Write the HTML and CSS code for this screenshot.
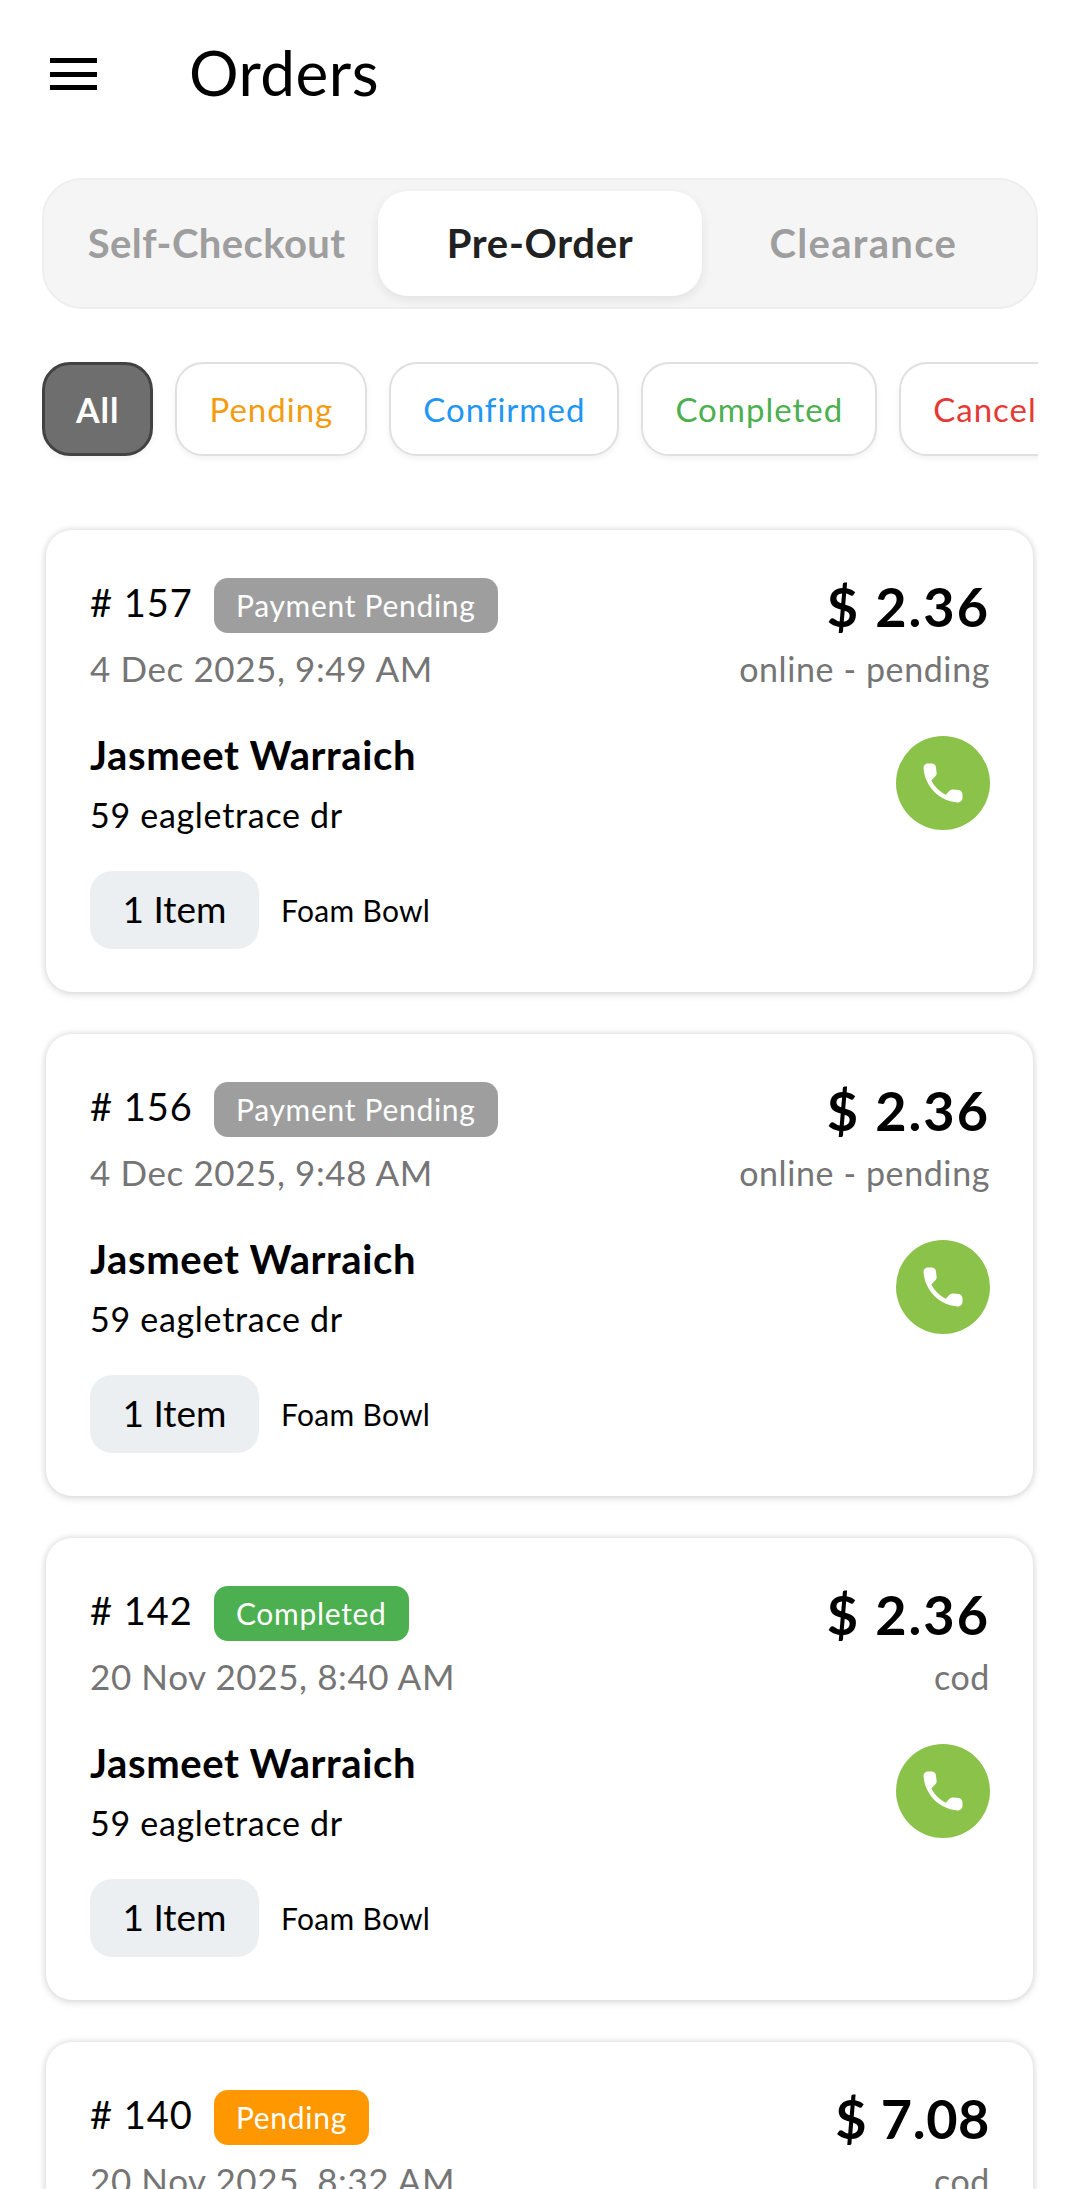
FILE: index.html
```html
<!DOCTYPE html>
<html lang="en">
<head>
<meta charset="utf-8">
<title>Orders</title>
<link rel="stylesheet" href="styles.css">
</head>
<body>
<header class="topbar">
  <svg class="menu-icon" viewBox="0 0 47 32"><path d="M0 0h47v5H0zM0 14h47v5H0zM0 27h47v5H0z"/></svg>
  <h1 class="title">Orders</h1>
</header>
<nav class="segments">
  <div class="segment seg-a">Self-Checkout</div>
  <div class="segment segment-active">Pre-Order</div>
  <div class="segment seg-c">Clearance</div>
</nav>
<div class="filters">
  <div class="chip chip-all">All</div>
  <div class="chip chip-pending">Pending</div>
  <div class="chip chip-confirmed">Confirmed</div>
  <div class="chip chip-completed">Completed</div>
  <div class="chip chip-cancelled">Cancelled</div>
</div>
<main class="orders">
  <article class="card">
    <div class="row">
      <div>
        <div class="id-line"><span class="order-id">#&nbsp;157</span><span class="badge badge-gray">Payment Pending</span></div>
        <div class="date">4 Dec 2025, 9:49 AM</div>
      </div>
      <div class="right"><div class="price">$ 2.36</div><div class="pay">online - pending</div></div>
    </div>
    <div class="row row-mid">
      <div><div class="name">Jasmeet Warraich</div><div class="addr">59 eagletrace dr</div></div>
      <div class="call"><svg viewBox="0 0 24 24"><path d="M19.23 15.26l-2.54-.29c-.61-.07-1.21.14-1.64.57l-1.84 1.84c-2.83-1.44-5.15-3.75-6.59-6.59l1.85-1.85c.43-.43.64-1.03.57-1.64l-.29-2.52c-.12-1.01-.97-1.77-1.99-1.77H5.03c-1.13 0-2.07.94-2 2.07.53 8.54 7.36 15.36 15.89 15.89 1.13.07 2.07-.87 2.07-2v-1.73c.01-1.01-.75-1.86-1.77-1.98z"/></svg></div>
    </div>
    <div class="items"><span class="count">1 Item</span><span class="product">Foam Bowl</span></div>
  </article>
  <article class="card">
    <div class="row">
      <div>
        <div class="id-line"><span class="order-id">#&nbsp;156</span><span class="badge badge-gray">Payment Pending</span></div>
        <div class="date">4 Dec 2025, 9:48 AM</div>
      </div>
      <div class="right"><div class="price">$ 2.36</div><div class="pay">online - pending</div></div>
    </div>
    <div class="row row-mid">
      <div><div class="name">Jasmeet Warraich</div><div class="addr">59 eagletrace dr</div></div>
      <div class="call"><svg viewBox="0 0 24 24"><path d="M19.23 15.26l-2.54-.29c-.61-.07-1.21.14-1.64.57l-1.84 1.84c-2.83-1.44-5.15-3.75-6.59-6.59l1.85-1.85c.43-.43.64-1.03.57-1.64l-.29-2.52c-.12-1.01-.97-1.77-1.99-1.77H5.03c-1.13 0-2.07.94-2 2.07.53 8.54 7.36 15.36 15.89 15.89 1.13.07 2.07-.87 2.07-2v-1.73c.01-1.01-.75-1.86-1.77-1.98z"/></svg></div>
    </div>
    <div class="items"><span class="count">1 Item</span><span class="product">Foam Bowl</span></div>
  </article>
  <article class="card">
    <div class="row">
      <div>
        <div class="id-line"><span class="order-id">#&nbsp;142</span><span class="badge badge-green">Completed</span></div>
        <div class="date">20 Nov 2025, 8:40 AM</div>
      </div>
      <div class="right"><div class="price">$ 2.36</div><div class="pay">cod</div></div>
    </div>
    <div class="row row-mid">
      <div><div class="name">Jasmeet Warraich</div><div class="addr">59 eagletrace dr</div></div>
      <div class="call"><svg viewBox="0 0 24 24"><path d="M19.23 15.26l-2.54-.29c-.61-.07-1.21.14-1.64.57l-1.84 1.84c-2.83-1.44-5.15-3.75-6.59-6.59l1.85-1.85c.43-.43.64-1.03.57-1.64l-.29-2.52c-.12-1.01-.97-1.77-1.99-1.77H5.03c-1.13 0-2.07.94-2 2.07.53 8.54 7.36 15.36 15.89 15.89 1.13.07 2.07-.87 2.07-2v-1.73c.01-1.01-.75-1.86-1.77-1.98z"/></svg></div>
    </div>
    <div class="items"><span class="count">1 Item</span><span class="product">Foam Bowl</span></div>
  </article>
  <article class="card">
    <div class="row">
      <div>
        <div class="id-line"><span class="order-id">#&nbsp;140</span><span class="badge badge-orange">Pending</span></div>
        <div class="date">20 Nov 2025, 8:32 AM</div>
      </div>
      <div class="right"><div class="price price-tight">$ 7.08</div><div class="pay">cod</div></div>
    </div>
  </article>
</main>
</body>
</html>
```
FILE: styles.css
```css
* { box-sizing: border-box; }
html, body { margin: 0; height: 2189px; overflow: hidden; }
body { background: #fff; color: #000; font-family: "Lato", "Open Sans", sans-serif; }

.topbar { display: flex; align-items: center; height: 148px; padding-left: 50px; }
.menu-icon { width: 47px; height: 32px; fill: #000; flex: none; }
.title { margin: 0 0 4px 92px; font-size: 62px; font-weight: 400; line-height: 70px; letter-spacing: 0.5px; }

.segments { display: flex; align-items: center; height: 131px; margin: 30px 42px 0; padding: 0 11px; background: #f5f5f5; border: 2px solid #eee; border-radius: 40px; }
.segment { flex: 1; display: flex; align-items: center; justify-content: center; height: 105px; padding-bottom: 2px; font-size: 40px; font-weight: 700; letter-spacing: 0.7px; color: #9e9e9e; border-radius: 30px; }
.seg-a { letter-spacing: 0.4px; }
.seg-c { letter-spacing: 1.3px; }
.segment-active { background: #fff; color: #212121; box-shadow: 0 4px 12px rgba(0,0,0,.08); }

.filters { display: flex; gap: 22px; height: 108px; margin: 53px 42px 0; overflow: hidden; }
.chip { flex: none; display: flex; align-items: center; height: 94px; padding: 0 32px; font-size: 33px; letter-spacing: 1px; background: #fff; border: 2px solid #e0e0e0; border-radius: 28px; box-shadow: 0 3px 6px rgba(0,0,0,.05); }
.chip-all { background: #6e6e6e; border: 3px solid #424242; color: #fff; font-weight: 700; font-size: 34px; padding: 0 31px; }
.chip-pending { color: #f39c12; }
.chip-confirmed { color: #2196f3; }
.chip-completed { color: #4caf50; }
.chip-cancelled { color: #e53935; }

.orders { display: flex; flex-direction: column; gap: 42px; margin: 60px 47px 0 46px; }
.card { height: 462px; padding: 47px 43px 0 44px; background: #fff; border-radius: 26px; box-shadow: 0 0 6px 1px rgba(0,0,0,.12), 0 3px 10px rgba(0,0,0,.07); }
.row { display: flex; justify-content: space-between; align-items: flex-start; }
.row-mid { align-items: center; height: 106px; margin-top: 39px; }
.id-line { display: flex; align-items: center; height: 56px; }
.order-id { padding-bottom: 6px; font-size: 38px; letter-spacing: 1px; }
.badge { margin-left: 21px; height: 55px; line-height: 55px; padding: 0 22px; color: #fff; font-size: 30px; letter-spacing: 0.7px; border-radius: 14px; }
.badge-gray { background: #9e9e9e; }
.badge-green { background: #4caf50; }
.badge-orange { background: #ff9800; }
.date { margin-top: 13px; height: 44px; line-height: 44px; font-size: 35px; letter-spacing: 0.6px; color: #757575; }
.right { text-align: right; }
.price { height: 56px; line-height: 59px; font-size: 54px; font-weight: 700; letter-spacing: 2px; }
.price-tight { letter-spacing: 0.6px; }
.pay { margin-top: 14px; height: 44px; line-height: 44px; font-size: 34px; letter-spacing: 0.6px; color: #757575; }
.name { font-size: 40px; font-weight: 700; letter-spacing: 0.6px; line-height: 50px; }
.addr { margin-top: 14px; font-size: 34px; letter-spacing: 0.7px; line-height: 42px; }
.call { display: flex; align-items: center; justify-content: center; flex: none; width: 94px; height: 94px; border-radius: 50%; background: #8bc34a; }
.call svg { width: 52px; height: 52px; fill: #fff; }
.items { display: flex; align-items: center; margin-top: 35px; }
.count { display: flex; align-items: center; justify-content: center; width: 169px; height: 78px; padding-bottom: 4px; font-size: 37px; background: #eceff1; border-radius: 22px; }
.product { margin-left: 22px; font-size: 30px; letter-spacing: 0.3px; }
```
